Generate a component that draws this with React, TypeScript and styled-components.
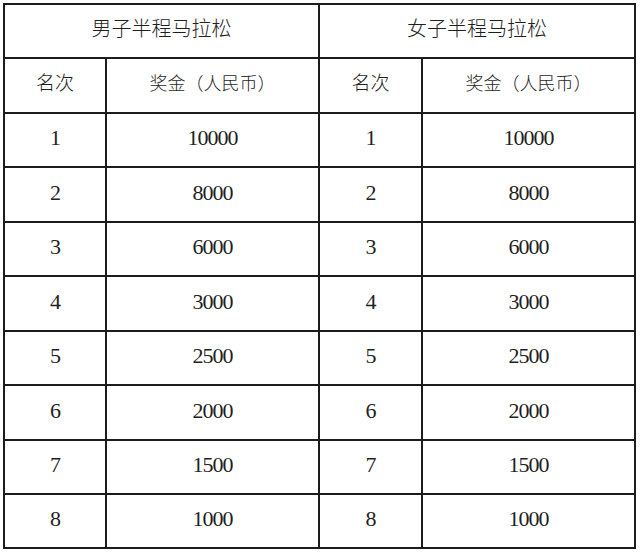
import React from "react";
import styled, { createGlobalStyle } from "styled-components";

const Global = createGlobalStyle`
  html, body { margin: 0; padding: 0; background: #ffffff; }
  body { font-family: "Liberation Serif", "Times New Roman", serif; }
`;

const Page = styled.div`
  padding: 3px 0 0 3px;
`;

const Grid = styled.div`
  display: grid;
  width: 629px;
  grid-template-columns: 100px 211px 101px 211px;
  grid-template-rows: 52px 53px 52px 53px 52px 53px 52px 53px 52px 52px;
  gap: 2px;
  padding: 2px;
  background: #1c1c1c;
`;

const Cell = styled.div<{ $span?: number; $lift?: number }>`
  grid-column: span ${(p) => p.$span ?? 1};
  background: #ffffff;
  display: flex;
  align-items: center;
  justify-content: center;
  color: #1f1f1f;
  padding-bottom: ${(p) => p.$lift ?? 4}px;
  box-sizing: border-box;
`;

const CnText = styled.span<{ $size: number }>`
  font-family: "Noto Sans CJK SC", sans-serif;
  font-weight: 300;
  font-size: ${(p) => p.$size}px;
  line-height: 1;
`;

const Num = styled.span`
  font-family: "Liberation Serif", "Times New Roman", serif;
  font-weight: 400;
  font-size: 22px;
  letter-spacing: -1px;
  line-height: 1;
`;

const prizes = ["10000", "8000", "6000", "3000", "2500", "2000", "1500", "1000"];

export default function App() {
  return (
    <>
      <Global />
      <Page>
        <Grid>
          <Cell $span={2} $lift={7}>
            <CnText $size={20}>男子半程马拉松</CnText>
          </Cell>
          <Cell $span={2} $lift={7}>
            <CnText $size={20}>女子半程马拉松</CnText>
          </Cell>
          <Cell $lift={8}>
            <CnText $size={19}>名次</CnText>
          </Cell>
          <Cell $lift={8}>
            <CnText $size={18}>奖金（人民币）</CnText>
          </Cell>
          <Cell $lift={8}>
            <CnText $size={19}>名次</CnText>
          </Cell>
          <Cell $lift={8}>
            <CnText $size={18}>奖金（人民币）</CnText>
          </Cell>
          {prizes.map((p, i) => (
            <React.Fragment key={i}>
              <Cell>
                <Num>{i + 1}</Num>
              </Cell>
              <Cell>
                <Num>{p}</Num>
              </Cell>
              <Cell>
                <Num>{i + 1}</Num>
              </Cell>
              <Cell>
                <Num>{p}</Num>
              </Cell>
            </React.Fragment>
          ))}
        </Grid>
      </Page>
    </>
  );
}
